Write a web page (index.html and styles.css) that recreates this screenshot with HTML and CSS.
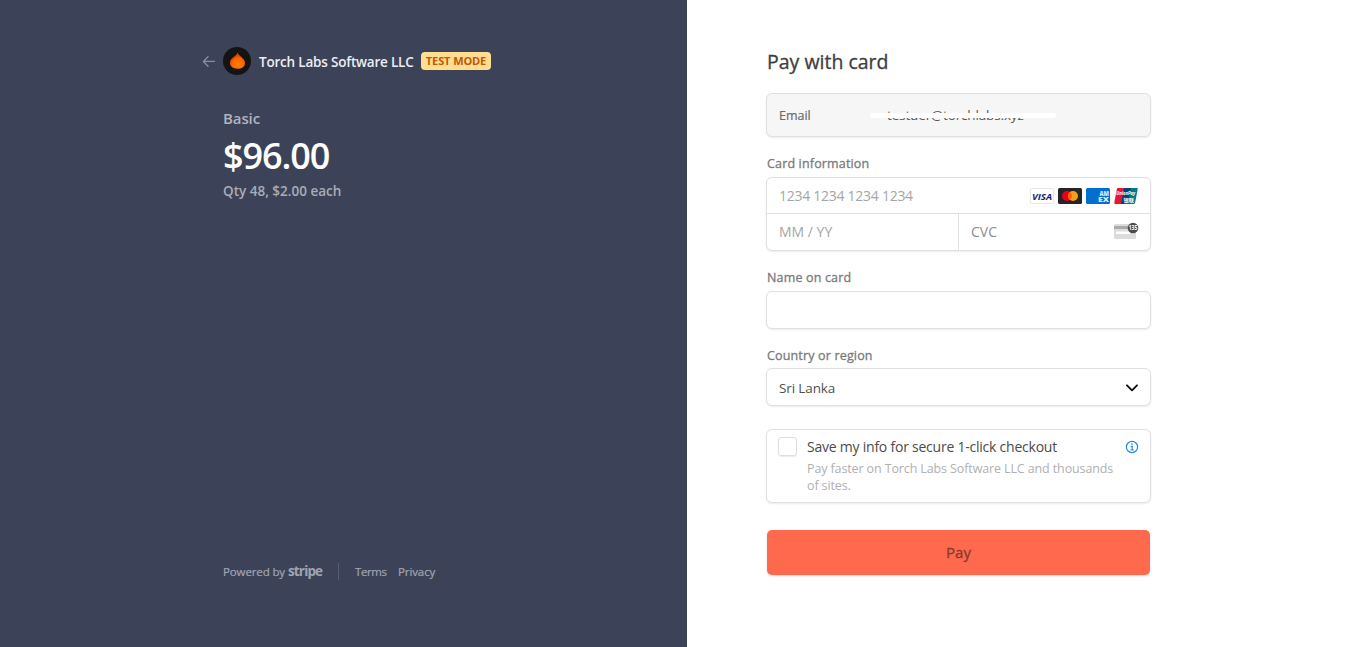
FILE: index.html
```html
<!DOCTYPE html>
<html lang="en">
<head>
<meta charset="utf-8">
<title>Torch Labs Software LLC</title>
<link rel="stylesheet" href="styles.css">
</head>
<body>
<div class="checkout">
  <section class="summary">
    <header class="merchant">
      <svg class="back" width="14" height="12" viewBox="0 0 14 12" fill="none" stroke="#868c9b" stroke-width="1.4" stroke-linecap="round" stroke-linejoin="round"><path d="M6 1.700 1.500 6.400 6 11.200M1.800 6.400H12.400"/></svg>
      <svg class="logo" width="28" height="28" viewBox="0 0 28 28">
        <defs><radialGradient id="flame" cx=".55" cy=".75" r=".65"><stop offset="0" stop-color="#ff7c00"/><stop offset=".6" stop-color="#fb6500"/><stop offset="1" stop-color="#c93c05"/></radialGradient></defs>
        <circle cx="14" cy="14" r="14" fill="#141414"/>
        <path d="M14.500 5.500C15.500 9 22 11.300 22 15.900c0 3.500-3.200 5.900-7.500 5.900s-7.600-2.300-7.600-5.700c0-2.600 1.400-4.400 3.400-5.800 1.700-1.200 3.400-2.400 4.200-4.800z" fill="url(#flame)"/>
      </svg>
      <span class="name">Torch Labs Software LLC</span>
      <span class="badge">TEST MODE</span>
    </header>
    <div class="product">Basic</div>
    <div class="price">$96.00</div>
    <div class="qty">Qty 48, $2.00 each</div>
    <footer class="footer">
      <span class="powered">Powered by</span><b class="stripe">stripe</b>
      <i class="rule"></i>
      <a class="terms">Terms</a><a class="privacy">Privacy</a>
    </footer>
  </section>
  <main class="payment">
    <h1 class="title">Pay with card</h1>
    <div class="box email">
      <span class="email-label">Email</span>
      <span class="address"><span class="address-text">testuer@torchlabs.xyz</span></span>
    </div>
    <div class="label card-label">Card information</div>
    <div class="box card">
      <div class="number">
        <span class="hint digits">1234 1234 1234 1234</span>
        <span class="brands">
          <svg width="24" height="16" viewBox="0 0 24 16"><rect x=".5" y=".5" width="23" height="15" rx="1.500" fill="#fff" stroke="#e6e6e6"/><text x="12" y="11.500" class="visa" textLength="20" lengthAdjust="spacingAndGlyphs">VISA</text></svg>
          <svg width="24" height="16" viewBox="0 0 24 16"><rect width="24" height="16" rx="1.500" fill="#252525"/><circle cx="9" cy="8" r="5" fill="#eb001b"/><circle cx="15" cy="8" r="5" fill="#f79e1b"/><path d="M12 4a5 5 0 0 1 0 8 5 5 0 0 1 0-8z" fill="#ff5f00"/></svg>
          <svg width="24" height="16" viewBox="0 0 24 16"><rect width="24" height="16" rx="1.500" fill="#016fd0"/><text x="13.500" y="7.500" class="amex" textLength="9.500" lengthAdjust="spacingAndGlyphs">AM</text><text x="12" y="13.800" class="amex" textLength="11" lengthAdjust="spacingAndGlyphs">EX</text></svg>
          <svg width="24" height="16" viewBox="0 0 24 16"><path d="M4 0h7L8 16H1.500Q0 16 .3 14.500L2.800 1.200Q3 0 4 0z" fill="#e21836"/><path d="M10 0h8l-3.500 16H7z" fill="#00447c"/><path d="M17 0h5.700q1.300 0 1 1.200l-2.600 13.500Q20.800 16 19.600 16H13.500z" fill="#007b84"/><text x="2.300" y="7.300" class="union" textLength="19" lengthAdjust="spacingAndGlyphs">UnionPay</text><text x="9.500" y="13.800" class="union-cn" textLength="10.500" lengthAdjust="spacingAndGlyphs">银联</text></svg>
        </span>
      </div>
      <div class="details">
        <div class="expiry"><span class="hint mmyy">MM / YY</span></div>
        <div class="cvc"><span class="hint cvc-text">CVC</span>
          <svg width="26" height="18" viewBox="0 0 26 18"><rect x="1" y="2" width="22" height="15" rx="1.500" fill="#dcdcdc"/><path d="M1 4h22v3H1z" fill="#aaa"/><path d="M3 9.500h14v2.500H3z" fill="#fff"/><circle cx="20" cy="6" r="5.300" fill="#4b4b4b"/><text x="20" y="8.400" class="ccv" textLength="8.500" lengthAdjust="spacingAndGlyphs">135</text></svg>
        </div>
      </div>
    </div>
    <div class="label name-label">Name on card</div>
    <div class="box field"></div>
    <div class="label country-label">Country or region</div>
    <div class="box field select"><span class="country">Sri Lanka</span>
      <svg width="14" height="10" viewBox="0 0 14 10" fill="none" stroke="#111" stroke-width="1.900" stroke-linecap="round" stroke-linejoin="round"><path d="M2 2.300l5 5 5-5"/></svg>
    </div>
    <div class="box save">
      <span class="checkbox"></span>
      <div class="save-copy">
        <div class="save-title">Save my info for secure 1-click checkout</div>
        <div class="save-note"><span class="note-one">Pay faster on Torch Labs Software LLC and thousands</span><br><span class="note-two">of sites.</span></div>
      </div>
      <svg class="info" width="14" height="14" viewBox="0 0 14 14" fill="none" stroke="#2189e3" stroke-width="1.200"><circle cx="7" cy="7" r="5.600"/><path d="M5.700 6.300H7.200V10M5.500 10h3.200"/><circle cx="7" cy="4" r=".85" fill="#2189e3" stroke="none"/></svg>
    </div>
    <button class="pay"><span class="pay-text">Pay</span></button>
  </main>
</div>
</body>
</html>
```
FILE: styles.css
```css
* { box-sizing: border-box; }
body { margin: 0; background: #fff; font-family: "Open Sans", "Noto Sans", sans-serif; }
.checkout { display: flex; width: 1346px; height: 647px; overflow: hidden; white-space: nowrap; }

.summary { width: 686.5px; background: #3c4358; padding: 47px 0 0 223px; display: flex; flex-direction: column; }
.merchant { display: flex; align-items: center; height: 28px; margin-left: -21px; }
.logo { margin-left: 7px; }
.name { margin-left: 8px; width: 162px; padding-top: 1px; font-size: 13.5px; font-weight: 600; color: #eceef1; letter-spacing: -.2px; }
.badge { width: 70px; height: 18px; border-radius: 4px; background: #ffde92; color: #c15809; font-size: 11px; line-height: 18px; font-weight: 700; text-align: center; letter-spacing: -.1px; }
.product { margin-top: 32px; font-size: 15px; line-height: 22px; font-weight: 600; color: #b1b4bd; letter-spacing: -.1px; }
.price { margin-top: 3px; font-size: 36px; line-height: 48px; font-weight: 600; color: #fff; letter-spacing: -1.100px; }
.qty { margin-top: 1px; font-size: 13.500px; line-height: 20px; font-weight: 600; color: #a9adb7; }
.footer { display: flex; align-items: center; height: 20px; margin: auto 0 66px; font-size: 11.500px; color: #a1a5b1; -webkit-text-stroke: .2px; }
.powered { letter-spacing: -.12px; }
.stripe { margin-left: 3px; font-size: 13.500px; letter-spacing: -.85px; line-height: 20px; width: 34px; -webkit-text-stroke: 0; }
.rule { width: 1px; height: 17px; background: #575d70; margin: 0 16px; }
.terms { width: 31px; letter-spacing: -.4px; }
.privacy { margin-left: 12px; letter-spacing: -.1px; }

.payment { width: 385px; margin-left: 79.500px; padding-top: 47px; display: flex; flex-direction: column; color: #3c3c3c; }
.title { margin: 0 0 0 1px; font-size: 19.500px; line-height: 29px; font-weight: 400; color: #3d3d3d; -webkit-text-stroke: .3px; }
.box { border: 1px solid #e0e0e0; border-radius: 6px; background: #fff; box-shadow: 0 1px 2px rgba(0, 0, 0, .08); }
.email { height: 44px; margin-top: 17px; background: #f6f6f6; display: flex; align-items: center; padding-left: 12px; }
.email-label { width: 91px; font-size: 12.500px; color: #6b6b6b; -webkit-text-stroke: .2px; }
.address { position: relative; width: 186px; padding-left: 17px; font-size: 13.500px; letter-spacing: -.14px; color: #555; }
.address::after { content: ""; position: absolute; left: 0; top: 7px; width: 186px; height: 5px; border-radius: 3px; background: #fff; }
.label { height: 18px; margin-left: 1px; font-size: 12.500px; line-height: 18px; letter-spacing: .16px; color: #7a7a7a; -webkit-text-stroke: .3px; }
.card-label { margin-top: 18px; }
.card { height: 74px; margin-top: 4px; }
.number { height: 36px; border-bottom: 1px solid #e0e0e0; display: flex; align-items: center; justify-content: space-between; padding: 0 12.500px 0 12px; }
.brands { display: flex; gap: 4px; }
.brands svg, .cvc svg { display: block; }
.hint { font-size: 14px; color: #a5a5a5; }
.digits { letter-spacing: -.27px; }
.details { display: flex; height: 36px; }
.expiry { width: 192px; border-right: 1px solid #e0e0e0; display: flex; align-items: center; padding: 0 0 2px 12px; }
.cvc { flex: 1; display: flex; align-items: center; justify-content: space-between; padding: 0 11px 2px 12px; }
.cvc-text { color: #8e8e8e; }
.name-label { margin-top: 18px; }
.field { height: 38px; margin-top: 4px; }
.country-label { margin-top: 18px; }
.select { margin-top: 3px; display: flex; align-items: center; justify-content: space-between; padding: 2px 11px 0 12px; font-size: 13.500px; letter-spacing: -.12px; color: #505050; }
.save { height: 74px; margin-top: 23px; display: flex; align-items: flex-start; padding: 7px 11px; }
.checkbox { width: 19px; height: 19px; border: 1px solid #dedede; border-radius: 3px; box-shadow: 0 1px 1px rgba(0, 0, 0, .08); }
.save-copy { flex: 1; margin-left: 10px; }
.save-title { font-size: 14px; line-height: 20px; letter-spacing: -.23px; color: #4b4b4b; }
.save-note { margin-top: 3px; font-size: 12.500px; line-height: 17px; letter-spacing: -.12px; color: #b0b0b0; }
.info { margin-top: 3px; }
.pay { width: 383px; height: 45px; margin: 27px 0 0 1px; border: 0; border-radius: 5px; background: #ff694d; box-shadow: 0 1px 2px rgba(0, 0, 0, .15); font: 400 15px/45px "Open Sans", "Noto Sans", sans-serif; color: #86392c; padding: 0; -webkit-text-stroke: .3px; }

.visa { font: italic 700 9.500px "Open Sans", sans-serif; fill: #1a1f71; text-anchor: middle; }
.amex { font: 800 6px "Open Sans", sans-serif; fill: #d9eaff; }
.union { font: italic 700 4.800px "Open Sans", sans-serif; fill: #fff; }
.union-cn { font: 700 4.800px "Noto Sans CJK SC", sans-serif; fill: #fff; }
.ccv { font: 700 6.500px "Open Sans", sans-serif; fill: #fff; text-anchor: middle; }
```
